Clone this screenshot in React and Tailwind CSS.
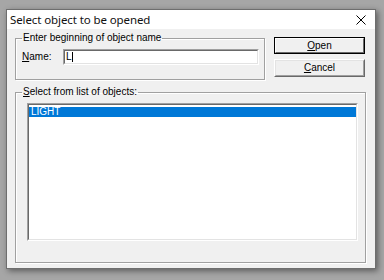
export default function App() {
  const ui = { fontFamily: '"Liberation Sans", Arial, sans-serif' };
  return (
    <div className="w-[384px] h-[280px] bg-[#a6a6a6] pt-[9px] pl-[6px] overflow-hidden" style={ui}>
      <div className="w-[370px] h-[260px] bg-[#f0f0f0] border border-[#6e6e6e] shadow-[2px_2px_6px_rgba(0,0,0,0.45)] flex flex-col">
        {/* title bar */}
        <div className="h-[19px] bg-white flex items-center justify-between pl-[3px] pr-[9px] shrink-0">
          <span className="text-[11.5px] text-[#111] leading-none tracking-[-0.1px]" style={{ fontFamily: '"Noto Sans", "Liberation Sans", sans-serif' }}>
            Select object to be opened
          </span>
          <svg width="10" height="10" viewBox="0 0 10 10">
            <path d="M0.5 0.5 L9.5 9.5 M9.5 0.5 L0.5 9.5" stroke="#000" strokeWidth="1" />
          </svg>
        </div>
        {/* body */}
        <div className="flex flex-col pl-[8px] pt-[3px] text-[10px] text-black leading-[12px]">
          <div className="flex">
            <fieldset className="w-[250px] h-[48px] border border-[#a0a0a0] shadow-[inset_1px_1px_0_#fff,1px_1px_0_#fff] pr-[5px]">
              <legend className="ml-[6px] px-[1px]">Enter beginning of object name</legend>
              <div className="flex items-center mt-[5px] ml-[6px]">
                <span className="w-[41px]"><span className="underline">N</span>ame:</span>
                <div className="w-[196px] h-[16px] border border-t-[#a0a0a0] border-l-[#a0a0a0] border-b-white border-r-white">
                  <div className="h-full border border-t-[#696969] border-l-[#696969] border-b-[#e3e3e3] border-r-[#e3e3e3] bg-white flex items-center pl-[1px]">
                    <span>L</span>
                    <span className="w-[1px] h-[10px] bg-black"></span>
                  </div>
                </div>
              </div>
            </fieldset>
            <div className="flex flex-col ml-[9px] mt-[5px] gap-[5px]">
              <div className="w-[91px] h-[17px] border border-black">
                <div className="h-full border border-t-white border-l-white border-b-[#696969] border-r-[#696969] flex items-center justify-center">
                  <span><span className="underline">O</span>pen</span>
                </div>
              </div>
              <div className="w-[91px] h-[18px] border border-t-white border-l-white border-b-[#696969] border-r-[#696969]">
                <div className="h-full border border-t-[#e3e3e3] border-l-[#e3e3e3] border-b-[#a0a0a0] border-r-[#a0a0a0] flex items-center justify-center">
                  <span><span className="underline">C</span>ancel</span>
                </div>
              </div>
            </div>
          </div>
          <fieldset className="w-[351px] h-[177px] mt-[6px] border border-[#a0a0a0] shadow-[inset_1px_1px_0_#fff,1px_1px_0_#fff] pr-[6px] pt-[5px]">
            <legend className="ml-[6px] px-[1px]"><span className="underline">S</span>elect from list of objects:</legend>
            <div className="ml-[11px] w-[331px] h-[138px] border border-t-[#a0a0a0] border-l-[#a0a0a0] border-b-white border-r-white">
              <div className="h-full border border-t-[#696969] border-l-[#696969] border-b-[#e3e3e3] border-r-[#e3e3e3] bg-white pt-[2px]">
                <div className="h-[10px] bg-[#0078d7] text-white flex items-center pl-[2px] leading-none">LIGHT</div>
              </div>
            </div>
          </fieldset>
        </div>
      </div>
    </div>
  );
}
